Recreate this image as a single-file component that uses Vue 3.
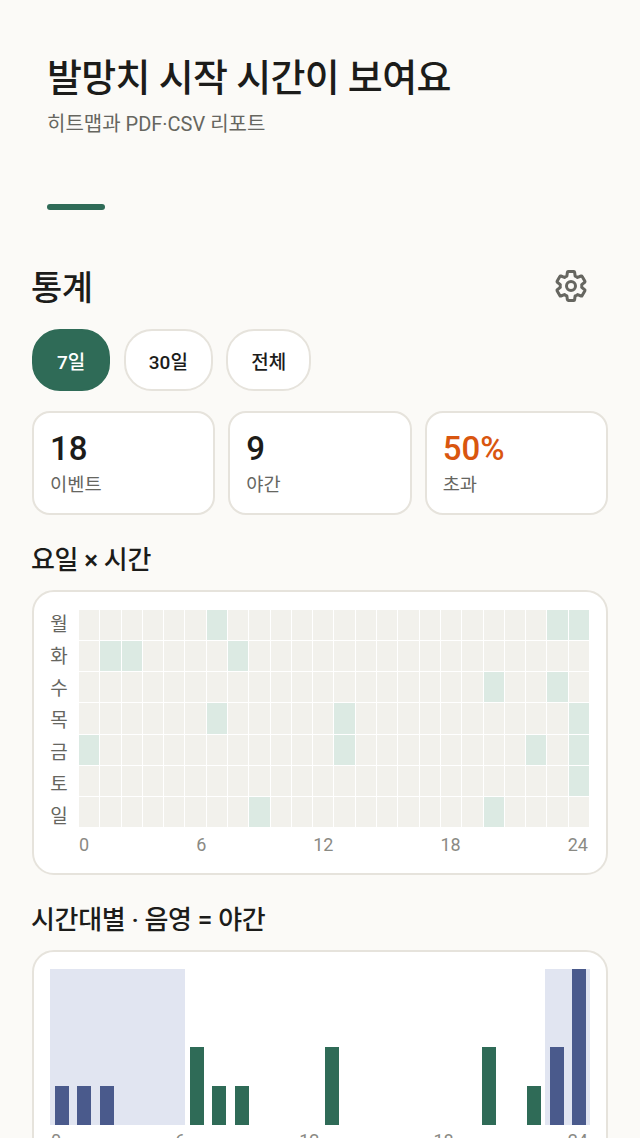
<template>
  <div class="page">
    <header class="hero">
      <h1 class="hero-title">발망치 시작 시간이 보여요</h1>
      <p class="hero-sub">히트맵과 PDF·CSV 리포트</p>
      <div class="hero-rule"></div>
    </header>

    <main class="content">
      <div class="head-row">
        <h2 class="page-title">통계</h2>
        <button class="icon-btn" aria-label="설정">
          <svg viewBox="0 0 24 24" class="gear" fill="none" stroke="currentColor" stroke-width="2" stroke-linejoin="round">
            <path d="M19.14 12.94c.04-.3.06-.61.06-.94 0-.32-.02-.64-.07-.94l2.03-1.58c.18-.14.23-.41.12-.61l-1.92-3.32c-.12-.22-.37-.29-.59-.22l-2.39.96c-.5-.38-1.03-.7-1.62-.94l-.36-2.54c-.04-.24-.24-.41-.48-.41h-3.84c-.24 0-.43.17-.47.41l-.36 2.54c-.59.24-1.13.57-1.62.94l-2.39-.96c-.22-.08-.47 0-.59.22L2.74 8.87c-.12.21-.08.47.12.61l2.03 1.58c-.05.3-.09.63-.09.94s.02.64.07.94l-2.03 1.58c-.18.14-.23.41-.12.61l1.92 3.32c.12.22.37.29.59.22l2.39-.96c.5.38 1.03.7 1.62.94l.36 2.54c.05.24.24.41.48.41h3.84c.24 0 .44-.17.47-.41l.36-2.54c.59-.24 1.13-.56 1.62-.94l2.39.96c.22.08.47 0 .59-.22l1.92-3.32c.12-.22.07-.47-.12-.61l-2.01-1.58z"/>
            <circle cx="12" cy="12" r="3"/>
          </svg>
        </button>
      </div>

      <div class="chips">
        <button v-for="r in ranges" :key="r" class="chip" :class="{ active: r === range }">{{ r }}</button>
      </div>

      <div class="stats">
        <div class="stat" v-for="s in stats" :key="s.label">
          <div class="stat-value" :class="{ warn: s.warn }">{{ s.value }}</div>
          <div class="stat-label">{{ s.label }}</div>
        </div>
      </div>

      <h3 class="section-title">요일 × 시간</h3>
      <section class="card heat-card">
        <div class="heat-body">
          <div class="days">
            <span v-for="d in days" :key="d" class="day">{{ d }}</span>
          </div>
          <div class="heat-main">
            <div class="heat-grid">
              <template v-for="(row, i) in days" :key="row">
                <div
                  v-for="h in 24"
                  :key="h"
                  class="cell"
                  :class="{ on: events[i].includes(h - 1) }"
                ></div>
              </template>
            </div>
            <div class="axis heat-axis">
              <span v-for="t in ticks" :key="t">{{ t }}</span>
            </div>
          </div>
        </div>
      </section>

      <h3 class="section-title">시간대별 · 음영 = 야간</h3>
      <section class="card bar-card">
        <div class="bars">
          <div v-for="(c, h) in hourly" :key="h" class="bar-col" :class="{ night: isNight(h) }">
            <div v-if="c" class="bar" :style="{ height: (c / maxCount) * 100 + '%' }"></div>
          </div>
        </div>
        <div class="axis bar-axis">
          <span v-for="t in ticks" :key="t">{{ t }}</span>
        </div>
      </section>
    </main>
  </div>
</template>

<script setup>
import { computed, ref } from 'vue'

const ranges = ['7일', '30일', '전체']
const range = ref('7일')
const days = ['월', '화', '수', '목', '금', '토', '일']
const ticks = [0, 6, 12, 18, 24]

// hours with an event, per weekday
const events = [
  [6, 22, 23],
  [1, 2, 7],
  [19, 22],
  [6, 12, 23],
  [0, 12, 21, 23],
  [23],
  [8, 19]
]

const isNight = (h) => h < 6 || h >= 22

const hourly = computed(() => {
  const out = new Array(24).fill(0)
  events.forEach((row) => row.forEach((h) => out[h]++))
  return out
})
const maxCount = computed(() => Math.max(...hourly.value))

const stats = computed(() => {
  const total = hourly.value.reduce((a, b) => a + b, 0)
  const night = hourly.value.reduce((a, c, h) => a + (isNight(h) ? c : 0), 0)
  return [
    { value: total, label: '이벤트' },
    { value: night, label: '야간' },
    { value: Math.round((night / total) * 100) + '%', label: '초과', warn: true }
  ]
})
</script>

<style>
html,
body {
  margin: 0;
  background: #fbfaf7;
}
</style>

<style scoped>
.page {
  height: 100vh;
  overflow: hidden;
  background: #fbfaf7;
  color: #1c1c1a;
  font-family: Roboto, "Noto Sans CJK KR", sans-serif;
}

.hero {
  padding: 49px 47px 0;
}

.hero-title {
  margin: 0;
  font-size: 38px;
  line-height: 58px;
  font-weight: 500;
  letter-spacing: -0.65px;
}

.hero-sub {
  margin: 1px 0 0;
  font-size: 20px;
  line-height: 32px;
  color: #66665f;
}

.hero-rule {
  width: 58px;
  height: 6px;
  margin-top: 64px;
  border-radius: 3px;
  background: #2f6b57;
}

.content {
  padding: 0 32px;
}

.head-row {
  display: flex;
  align-items: center;
  justify-content: space-between;
  margin-top: 48px;
  height: 60px;
}

.page-title {
  margin: 0;
  margin-left: -1px;
  font-size: 34px;
  font-weight: 500;
  line-height: 60px;
  letter-spacing: -0.5px;
}

.icon-btn {
  display: flex;
  width: 36px;
  height: 36px;
  margin-right: 19px;
  margin-bottom: 4px;
  padding: 0;
  border: none;
  background: none;
  color: #666660;
}

.gear {
  width: 36px;
  height: 36px;
}

.chips {
  display: flex;
  gap: 13.5px;
  margin-top: 11px;
}

.chip {
  height: 62px;
  padding: 0 23px;
  border: 2px solid #e6e3dc;
  border-radius: 28px;
  background: #fff;
  color: #1c1c1a;
  font-family: inherit;
  font-size: 19px;
  font-weight: 500;
}

.chip.active {
  border-color: #2f6b57;
  background: #2f6b57;
  color: #fff;
}

.stats {
  display: grid;
  grid-template-columns: repeat(3, 1fr);
  gap: 13px;
  margin-top: 20px;
}

.stat {
  height: 104px;
  box-sizing: border-box;
  padding: 17px 16px;
  border: 2px solid #e6e3dc;
  border-radius: 18px;
  background: #fff;
}

.stat-value {
  font-size: 33px;
  line-height: 38px;
  font-weight: 500;
}

.stat-value.warn {
  color: #d9560f;
}

.stat-label {
  margin-top: 4px;
  font-size: 18.7px;
  line-height: 26px;
  color: #66665f;
}

.section-title {
  margin: 24px 0 0;
  margin-left: -1px;
  font-size: 26px;
  line-height: 42px;
  font-weight: 500;
  letter-spacing: -0.35px;
}

.card {
  box-sizing: border-box;
  margin-top: 9px;
  border: 2px solid #e6e3dc;
  border-radius: 22px;
  background: #fff;
}

.heat-card {
  height: 285px;
  padding: 18px 17px 0 16px;
}

.heat-body {
  display: flex;
  gap: 11px;
}

.days {
  display: flex;
  flex-direction: column;
  width: 18px;
  height: 224px;
  margin-top: -4px;
}

.day {
  flex: 1;
  display: flex;
  align-items: center;
  justify-content: center;
  font-size: 19px;
  color: #66665f;
}

.heat-main {
  flex: 1;
  min-width: 0;
}

.heat-grid {
  display: grid;
  grid-template-columns: repeat(24, 1fr);
  grid-template-rows: repeat(7, 1fr);
  gap: 1px;
  height: 217px;
}

.cell {
  background: #f2f1ec;
}

.cell.on {
  background: #dceae3;
}

.axis {
  display: flex;
  justify-content: space-between;
  margin-top: 6px;
  font-size: 18px;
  line-height: 24px;
  color: #8a8a84;
}

.heat-axis {
  padding-right: 1px;
}

.bar-card {
  height: 240px;
  padding: 17px 16px 0;
}

.bars {
  display: grid;
  grid-template-columns: repeat(24, 1fr);
  align-items: stretch;
  height: 156px;
}

.bar-col {
  display: flex;
  align-items: flex-end;
  padding: 0 4px 0 4.5px;
}

.bar-col.night {
  background: #e1e5f1;
}

.bar {
  flex: 1;
  background: #2f6b57;
}

.night .bar {
  background: #4a5a8c;
}

.bar-axis {
  margin-top: 4px;
  padding: 0 2px 0 1px;
}
</style>
